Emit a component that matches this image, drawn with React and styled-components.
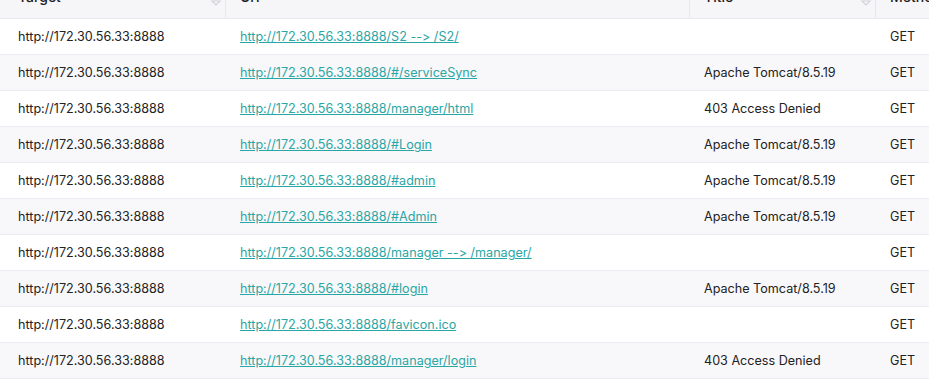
import React from 'react';
import styled, { createGlobalStyle } from "styled-components";

const rows = [
    ['http://172.30.56.33:8888/S2 --> /S2/', ''],
    ['http://172.30.56.33:8888/#/serviceSync', 'Apache Tomcat/8.5.19'],
    ['http://172.30.56.33:8888/manager/html', '403 Access Denied'],
    ['http://172.30.56.33:8888/#Login', 'Apache Tomcat/8.5.19'],
    ['http://172.30.56.33:8888/#admin', 'Apache Tomcat/8.5.19'],
    ['http://172.30.56.33:8888/#Admin', 'Apache Tomcat/8.5.19'],
    ['http://172.30.56.33:8888/manager --> /manager/', ''],
    ['http://172.30.56.33:8888/#login', 'Apache Tomcat/8.5.19'],
    ['http://172.30.56.33:8888/favicon.ico', ''],
    ['http://172.30.56.33:8888/manager/login', '403 Access Denied'],
];

function SortIcon() {
    return (
        <svg width="12" height="16" viewBox="0 0 12 16" fill="none" stroke="#d2d2d7" strokeWidth="1.1">
            <path d="M2 6 L6 2 L10 6 Z" />
            <path d="M2 10 L6 14 L10 10 Z" />
        </svg>
    );
}

function App() {
    return (
        <>
            <GlobalStyle />
            <Table>
                <HeadRow>
                    <HeadCell $first>Target<Sort><SortIcon /></Sort></HeadCell>
                    <HeadCell>Url</HeadCell>
                    <HeadCell>Title<Sort><SortIcon /></Sort></HeadCell>
                    <HeadCell $last>Method</HeadCell>
                </HeadRow>
                {rows.map(([url, title], i) => (
                    <Row key={i} $striped={i % 2 === 1}>
                        <Cell $first>http://172.30.56.33:8888</Cell>
                        <Cell><Link href="#">{url}</Link></Cell>
                        <Cell>{title}</Cell>
                        <Cell>GET</Cell>
                    </Row>
                ))}
            </Table>
        </>
    );
}

export default App;

const GlobalStyle = createGlobalStyle`
  body {
    margin: 0;
    background: #fff;
    font-family: Inter, "Noto Sans", sans-serif;
    font-feature-settings: "calt" 0, "liga" 0;
    overflow: hidden;
  }
`

const Table = styled.div`
  width: 929px;
  overflow: hidden;
`

const HeadRow = styled.div`
  display: grid;
  grid-template-columns: 226px 464px 186px 140px;
  height: 18px;
  background: #f6f6f8;
  border-bottom: 1px solid #e7e7ec;
  overflow: hidden;
`

const HeadCell = styled.div`
  position: relative;
  display: flex;
  align-items: flex-end;
  padding-left: ${p => p.$first ? '18px' : '14px'};
  padding-bottom: 11px;
  font-size: 14px;
  font-weight: 500;
  color: #1d1d1f;
  line-height: 20px;
  border-right: ${p => p.$last ? 'none' : '1px solid #e7e7ec'};
  box-sizing: border-box;
  height: 18px;
  overflow: hidden;
`

const Sort = styled.span`
  position: absolute;
  right: 3px;
  bottom: 11px;
  display: flex;
`

const Row = styled.div`
  display: grid;
  grid-template-columns: 226px 464px 186px 140px;
  height: 35px;
  background: ${p => p.$striped ? '#f8f8fa' : '#fff'};
  border-bottom: 1px solid #ececf0;
`

const Cell = styled.div`
  display: flex;
  align-items: center;
  padding-left: ${p => p.$first ? '18px' : '14px'};
  font-size: 12.6px;
  color: #222;
  white-space: nowrap;
`

const Link = styled.a`
  color: #2aa6a4;
  text-decoration: underline;
`
